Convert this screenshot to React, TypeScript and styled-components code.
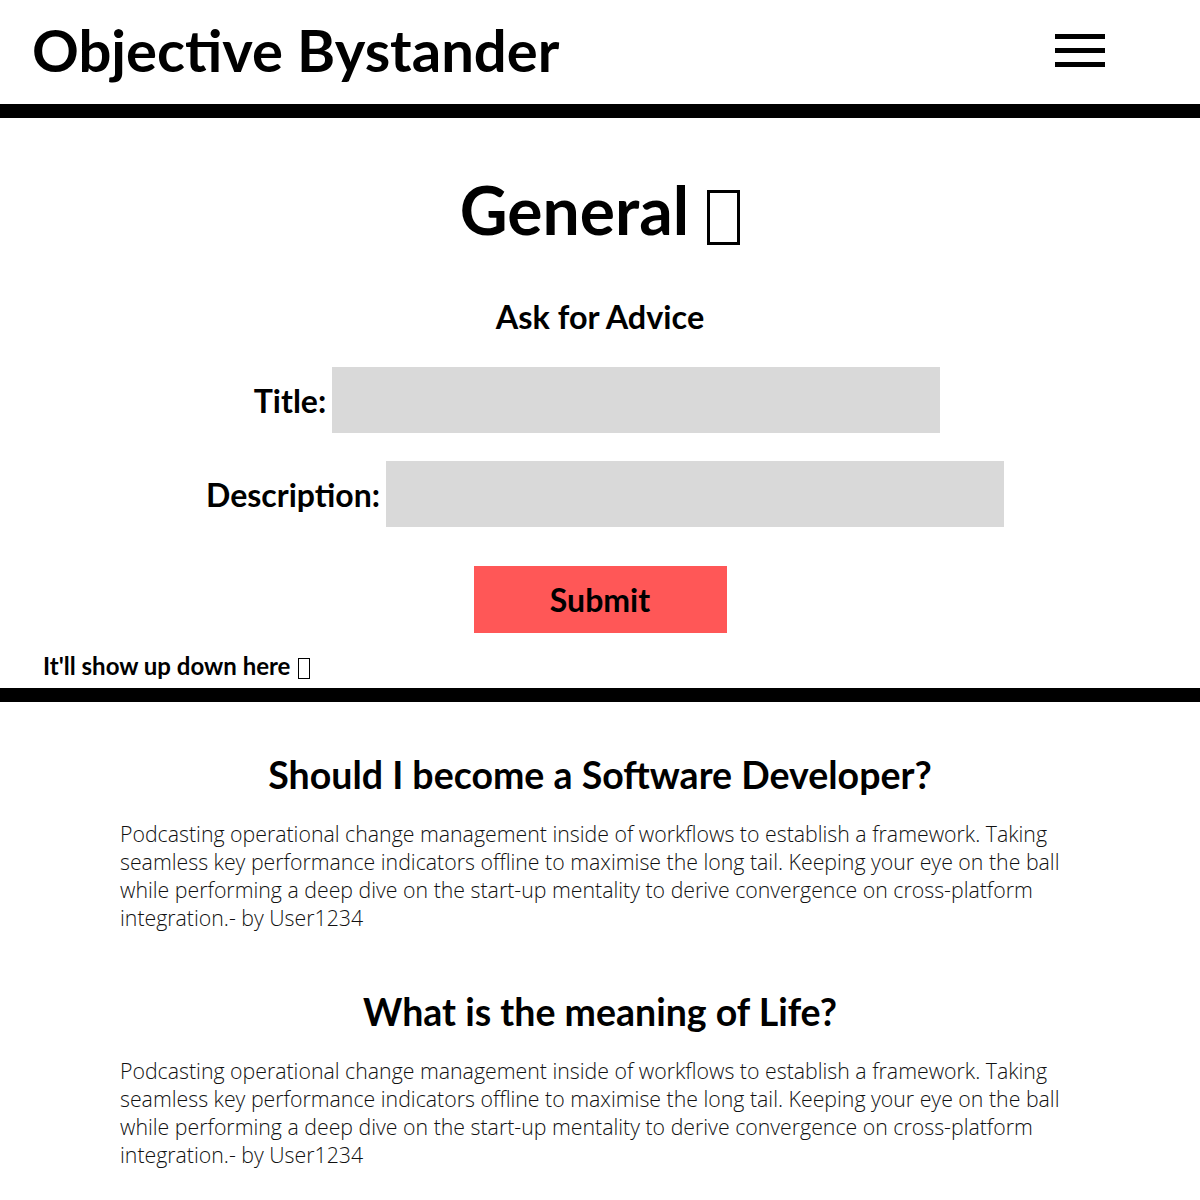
import React from 'react';
import styled, { createGlobalStyle } from 'styled-components';

const GlobalStyle = createGlobalStyle`
  body {
    margin: 0;
    background: #fff;
    color: #000;
    font-family: Lato, "Noto Sans", sans-serif;
  }
`;

const Header = styled.header`
  display: flex;
  align-items: center;
  justify-content: space-between;
  height: 104px;
  padding: 0 95px 0 32px;
  border-bottom: 14px solid #000;
`;

const Brand = styled.h1`
  margin: 0;
  font-size: 58px;
  font-weight: 700;
  line-height: 1;
  margin-top: -4px;
`;

const Burger = styled.button`
  display: flex;
  flex-direction: column;
  gap: 9px;
  padding: 0;
  margin-top: -3px;
  border: none;
  background: none;
  cursor: pointer;
`;

const BurgerLine = styled.span`
  display: block;
  width: 50px;
  height: 5px;
  background: #000;
`;

// the emoji shows as an empty glyph box in the design
const Tofu = styled.span<{ $w: number; $h: number }>`
  display: inline-block;
  box-sizing: border-box;
  width: ${p => p.$w}px;
  height: ${p => p.$h}px;
  border: ${p => (p.$w > 20 ? 3 : 1.5)}px solid #000;
  vertical-align: ${p => (p.$w > 20 ? '-10px' : '-4px')};
  margin-left: 2px;
`;

const FormSection = styled.section`
  display: flex;
  flex-direction: column;
  align-items: center;
  padding: 52px 0 7px;
  border-bottom: 14px solid #000;
`;

const PageTitle = styled.h2`
  margin: 0;
  font-size: 66px;
  font-weight: 700;
  line-height: 80px;
`;

const FormTitle = styled.h3`
  margin: 47px 0 0;
  font-size: 32.4px;
  font-weight: 700;
  line-height: 40px;
`;

const Form = styled.form`
  display: flex;
  flex-direction: column;
  align-items: center;
  width: 100%;
`;

const Row = styled.label<{ $offset: number; $shift: number }>`
  display: flex;
  align-items: center;
  gap: 6px;
  margin-top: ${p => p.$offset}px;
  transform: translateX(${p => p.$shift}px);
  font-size: 32px;
  font-weight: 700;
`;

const Field = styled.input<{ $width: number }>`
  width: ${p => p.$width}px;
  height: 66px;
  box-sizing: border-box;
  border: none;
  background: #d9d9d9;
  font-family: Lato, sans-serif;
  font-size: 22px;
  padding: 0 12px;
  outline: none;
`;

const SubmitButton = styled.button`
  margin-top: 39px;
  width: 253px;
  height: 67px;
  border: none;
  background: #ff5757;
  font-family: Lato, sans-serif;
  font-size: 32px;
  font-weight: 700;
  color: #000;
  cursor: pointer;
`;

const Hint = styled.p`
  align-self: flex-start;
  margin: 18px 0 0 43px;
  font-size: 24px;
  font-weight: 700;
  line-height: 30px;
`;

const Posts = styled.main`
  display: flex;
  flex-direction: column;
  align-items: center;
  padding: 50px 120px 20px;
`;

const Post = styled.article`
  width: 100%;
  margin-bottom: 57px;
`;

const PostTitle = styled.h4`
  margin: 0;
  text-align: center;
  font-size: 37.5px;
  font-weight: 700;
  line-height: 46px;
`;

const PostBody = styled.p`
  margin: 22px 0 0;
  font-family: "Open Sans", sans-serif;
  font-weight: 300;
  font-size: 21.3px;
  line-height: 28px;
  color: #111;
`;

const lorem =
  'Podcasting operational change management inside of workflows to establish a framework. Taking seamless key performance indicators offline to maximise the long tail. Keeping your eye on the ball while performing a deep dive on the start-up mentality to derive convergence on cross-platform integration.';

const posts = [
  { title: 'Should I become a Software Developer?', body: lorem, author: 'User1234' },
  { title: 'What is the meaning of Life?', body: lorem, author: 'User1234' },
];

export default function App() {
  return (
    <>
      <GlobalStyle />
      <Header>
        <Brand>Objective Bystander</Brand>
        <Burger aria-label="Menu">
          <BurgerLine />
          <BurgerLine />
          <BurgerLine />
        </Burger>
      </Header>

      <FormSection>
        <PageTitle>
          General <Tofu $w={33} $h={55} />
        </PageTitle>
        <FormTitle>Ask for Advice</FormTitle>
        <Form onSubmit={e => e.preventDefault()}>
          <Row $offset={30} $shift={-3}>
            Title:
            <Field $width={608} />
          </Row>
          <Row $offset={28} $shift={5}>
            Description:
            <Field $width={618} />
          </Row>
          <SubmitButton type="submit">Submit</SubmitButton>
        </Form>
        <Hint>
          It'll show up down here <Tofu $w={12} $h={21} />
        </Hint>
      </FormSection>

      <Posts>
        {posts.map(post => (
          <Post key={post.title}>
            <PostTitle>{post.title}</PostTitle>
            <PostBody>{`${post.body}- by ${post.author}`}</PostBody>
          </Post>
        ))}
      </Posts>
    </>
  );
}
